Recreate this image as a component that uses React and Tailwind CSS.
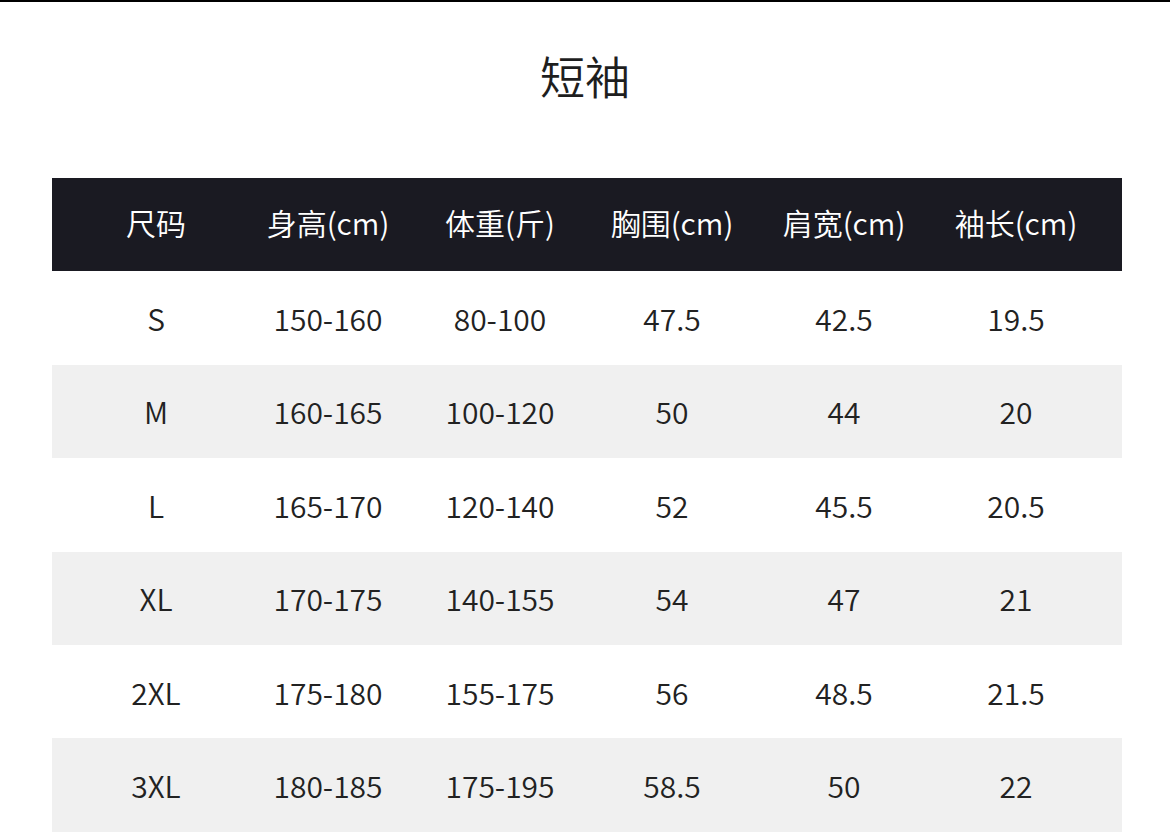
export default function App() {
  const headers = ["尺码", "身高(cm)", "体重(斤)", "胸围(cm)", "肩宽(cm)", "袖长(cm)"];
  const rows = [
    ["S", "150-160", "80-100", "47.5", "42.5", "19.5"],
    ["M", "160-165", "100-120", "50", "44", "20"],
    ["L", "165-170", "120-140", "52", "45.5", "20.5"],
    ["XL", "170-175", "140-155", "54", "47", "21"],
    ["2XL", "175-180", "155-175", "56", "48.5", "21.5"],
    ["3XL", "180-185", "175-195", "58.5", "50", "22"],
  ];
  const font = { fontFamily: '"Noto Sans CJK SC", "Noto Sans", sans-serif' };
  return (
    <div className="w-[1170px] h-[840px] bg-white border-t-2 border-black overflow-hidden" style={font}>
      <div className="h-[176px] pt-[51px] flex justify-center">
        <div className="text-[45px] leading-none font-[350] text-[#1e1e1e]">短袖</div>
      </div>
      <div className="ml-[52px] w-[1070px]">
        <div className="h-[93.4px] bg-[#1a1a22] px-[18px] pb-[5px] grid grid-cols-[repeat(6,172px)] items-center">
          {headers.map((h) => (
            <div key={h} className="text-center text-white text-[30px] font-[350] leading-none">{h}</div>
          ))}
        </div>
        {rows.map((r, i) => (
          <div
            key={r[0]}
            className={`h-[93.4px] px-[18px] grid grid-cols-[repeat(6,172px)] items-center ${i % 2 === 1 ? "bg-[#f0f0f0]" : "bg-white"}`}
          >
            {r.map((c, j) => (
              <div key={j} className="text-center text-[#222222] text-[30px] font-[350] leading-none">{c}</div>
            ))}
          </div>
        ))}
      </div>
    </div>
  );
}
